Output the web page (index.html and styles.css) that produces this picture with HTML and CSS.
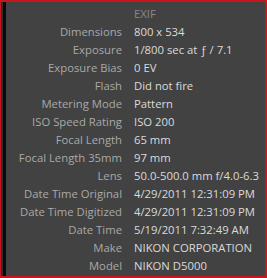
FILE: index.html
```html
<!DOCTYPE html>
<html>
<head>
<meta charset="utf-8">
<link rel="stylesheet" href="styles.css">
</head>
<body>
<div class="frame">
  <div class="strip"></div>
  <div class="panel">
    <div class="grid">
      <div class="label"></div><div class="value head">EXIF</div>
      <div class="label">Dimensions</div><div class="value">800 x 534</div>
      <div class="label">Exposure</div><div class="value">1/800 sec at ƒ / 7.1</div>
      <div class="label">Exposure Bias</div><div class="value">0 EV</div>
      <div class="label">Flash</div><div class="value">Did not fire</div>
      <div class="label">Metering Mode</div><div class="value">Pattern</div>
      <div class="label">ISO Speed Rating</div><div class="value">ISO 200</div>
      <div class="label">Focal Length</div><div class="value">65 mm</div>
      <div class="label">Focal Length 35mm</div><div class="value">97 mm</div>
      <div class="label">Lens</div><div class="value">50.0-500.0 mm f/4.0-6.3</div>
      <div class="label">Date Time Original</div><div class="value">4/29/2011 12:31:09 PM</div>
      <div class="label">Date Time Digitized</div><div class="value">4/29/2011 12:31:09 PM</div>
      <div class="label">Date Time</div><div class="value">5/19/2011 7:32:49 AM</div>
      <div class="label">Make</div><div class="value">NIKON CORPORATION</div>
      <div class="label">Model</div><div class="value">NIKON D5000</div>
    </div>
  </div>
</div>
</body>
</html>
```
FILE: styles.css
```css
html, body {
  margin: 0;
  padding: 0;
  background: #424242;
}
.frame {
  width: 267px;
  height: 278px;
  box-sizing: border-box;
  border-top: 2px solid #c8161c;
  border-right: 2px solid #c8161c;
  border-bottom: 2px solid #c8161c;
  border-left: 1px solid #c8161c;
  display: flex;
  background: #424242;
  overflow: hidden;
}
.strip {
  width: 2px;
  background: #2e2e2e;
  border-right: 3px solid #0a0a0a;
  flex: none;
}
.panel {
  flex: 1;
  padding-top: 3px;
}
.grid {
  display: grid;
  grid-template-columns: 116px 1fr;
  column-gap: 12px;
  font-family: "Open Sans", sans-serif;
  font-size: 11.3px;
  line-height: 18px;
}
.label {
  text-align: right;
  color: #a9a9a9;
  white-space: nowrap;
}
.value {
  color: #dadada;
  white-space: nowrap;
}
.value.head {
  color: #8a8a8a;
}
```
